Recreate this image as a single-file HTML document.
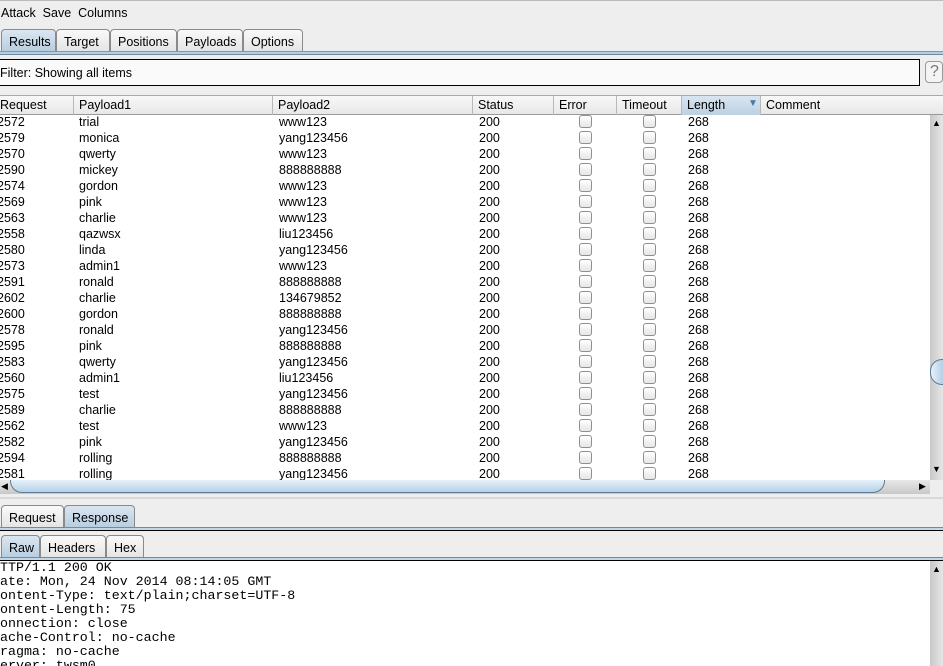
<!DOCTYPE html>
<html><head><meta charset="utf-8"><style>
*{margin:0;padding:0;box-sizing:border-box}
body{width:943px;height:666px;overflow:hidden;background:#eeeeee;font-family:"Liberation Sans",sans-serif;font-size:12px;color:#000;position:relative}
.a{position:absolute}
.tab{position:absolute;height:23px;border:1px solid #8a8a8a;border-bottom:none;border-radius:4px 4px 0 0;background:linear-gradient(#fafafa,#e4e4e4);padding:5px 7px 0;font-size:12.5px}
.tab.s{background:linear-gradient(#dbe6f0,#b6cde0)}
.hd{position:absolute;top:96px;height:19px;border-right:1px solid #b8b8b8;padding:2px 0 0 5px;font-size:12.5px}
.row{position:absolute;left:0;width:930px;height:16px;font-size:12.5px;line-height:16px}
.row span{position:absolute;top:0}
.cb{position:absolute;top:1px;width:13px;height:13px;border:1px solid #8f8f8f;border-radius:3px;background:linear-gradient(#fff,#e6e6e6)}
pre{font-family:"Liberation Mono",monospace;font-size:13.3px;line-height:14px}
</style></head><body>
<div class="a" style="left:0;top:0;width:943px;height:26px;background:#eeeeee;padding:6px 0 0 1px;font-size:12.5px">Attack&nbsp; Save&nbsp; Columns</div>
<div class="a" style="left:0;top:0;width:943px;height:1px;background:#bbb"></div>
<div class="tab s" style="left:1px;top:29px;width:55px">Results</div>
<div class="tab" style="left:56px;top:29px;width:54px">Target</div>
<div class="tab" style="left:110px;top:29px;width:67px">Positions</div>
<div class="tab" style="left:177px;top:29px;width:66px">Payloads</div>
<div class="tab" style="left:243px;top:29px;width:60px">Options</div>
<div class="a" style="left:0;top:51px;width:943px;height:4px;background:#b9cde0;border-bottom:1px solid #6f8aa3;border-top:1px solid #7f98ae"></div>
<div class="a" style="left:0;top:59px;width:920px;height:27px;background:#fafafa;border:1px solid #000;border-left:none;padding:6px 0 0 0;font-size:12.5px">Filter: Showing all items</div>
<div class="a" style="left:925px;top:61px;width:18px;height:22px;border:1px solid #999;border-radius:4px;background:#f4f4f4;color:#777;font-size:16px;padding:1px 0 0 4px">?</div>
<div class="a" style="left:0;top:95px;width:943px;height:20px;background:linear-gradient(#f8f8f8,#e8e8e8);border-top:1px solid #aaa;border-bottom:1px solid #999"></div>
<div class="hd" style="left:-5px;width:79px">Request</div>
<div class="hd" style="left:74px;width:199px">Payload1</div>
<div class="hd" style="left:273px;width:200px">Payload2</div>
<div class="hd" style="left:473px;width:81px">Status</div>
<div class="hd" style="left:554px;width:63px">Error</div>
<div class="hd" style="left:617px;width:65px">Timeout</div>
<div class="hd" style="left:682px;width:79px;background:linear-gradient(#d9e6f1,#bcd0e2)">Length<span style="position:absolute;left:66px;top:2px;color:#4a79a8;font-size:10px">▼</span></div>
<div class="hd" style="left:761px;width:169px;border:none">Comment</div>
<div class="a" style="left:0;top:115px;width:930px;height:365px;background:#fff;overflow:hidden" id="t"></div>
<div class="a" style="left:930px;top:115px;width:13px;height:365px;background:linear-gradient(90deg,#c8c8c8,#e6e6e6)"></div>
<div class="a" style="left:932px;top:118px;font-size:9px">▲</div>
<div class="a" style="left:932px;top:464px;font-size:9px">▼</div>
<div class="a" style="left:930px;top:359px;width:13px;height:26px;border:1px solid #5b7b99;border-right:none;border-radius:12px 0 0 12px;background:linear-gradient(90deg,#e6f1fa,#b5d0e6)"></div>
<div class="a" style="left:0;top:480px;width:930px;height:14px;background:linear-gradient(#e8e8e8,#c8c8c8)"></div>
<div class="a" style="left:10px;top:480px;width:875px;height:13px;border:1px solid #5b7b99;border-top:none;border-radius:0 0 12px 12px;background:linear-gradient(#e6f1fa,#b5d0e6)"></div>
<div class="a" style="left:1px;top:481px;font-size:9px">◀</div>
<div class="a" style="left:919px;top:481px;font-size:9px">▶</div>
<div class="a" style="left:0;top:497px;width:943px;height:2px;background:#d8d8d8"></div>
<div class="tab" style="left:1px;top:505px;width:63px">Request</div>
<div class="tab s" style="left:64px;top:505px;width:71px">Response</div>
<div class="a" style="left:0;top:527px;width:943px;height:4px;background:#c4d6e6;border-top:1px solid #6f8aa3;border-bottom:1px solid #000"></div>
<div class="tab s" style="left:1px;top:535px;width:39px">Raw</div>
<div class="tab" style="left:40px;top:535px;width:66px">Headers</div>
<div class="tab" style="left:106px;top:535px;width:38px">Hex</div>
<div class="a" style="left:0;top:557px;width:943px;height:4px;background:#c4d6e6;border-top:1px solid #6f8aa3;border-bottom:1px solid #000"></div>
<div class="a" style="left:0;top:561px;width:930px;height:105px;background:#fff;overflow:hidden"><pre style="margin-top:0">TTP/1.1 200 OK
ate: Mon, 24 Nov 2014 08:14:05 GMT
ontent-Type: text/plain;charset=UTF-8
ontent-Length: 75
onnection: close
ache-Control: no-cache
ragma: no-cache
erver: twsm0</pre></div>
<div class="a" style="left:930px;top:561px;width:13px;height:105px;background:linear-gradient(90deg,#c8c8c8,#e6e6e6)"></div>
<div class="a" style="left:932px;top:564px;font-size:9px">▲</div>
<script>
var d=[["2572","trial","www123"],["2579","monica","yang123456"],["2570","qwerty","www123"],["2590","mickey","888888888"],["2574","gordon","www123"],["2569","pink","www123"],["2563","charlie","www123"],["2558","qazwsx","liu123456"],["2580","linda","yang123456"],["2573","admin1","www123"],["2591","ronald","888888888"],["2602","charlie","134679852"],["2600","gordon","888888888"],["2578","ronald","yang123456"],["2595","pink","888888888"],["2583","qwerty","yang123456"],["2560","admin1","liu123456"],["2575","test","yang123456"],["2589","charlie","888888888"],["2562","test","www123"],["2582","pink","yang123456"],["2594","rolling","888888888"],["2581","rolling","yang123456"]];
var h="";d.forEach(function(r,i){var t=i*16-1;h+='<div class="row" style="top:'+t+'px"><span style="left:-3px">'+r[0]+'</span><span style="left:79px">'+r[1]+'</span><span style="left:279px">'+r[2]+'</span><span style="left:479px">200</span><div class="cb" style="left:579px"></div><div class="cb" style="left:643px"></div><span style="left:688px">268</span></div>';});
document.getElementById("t").innerHTML=h;
</script>
</body></html>
